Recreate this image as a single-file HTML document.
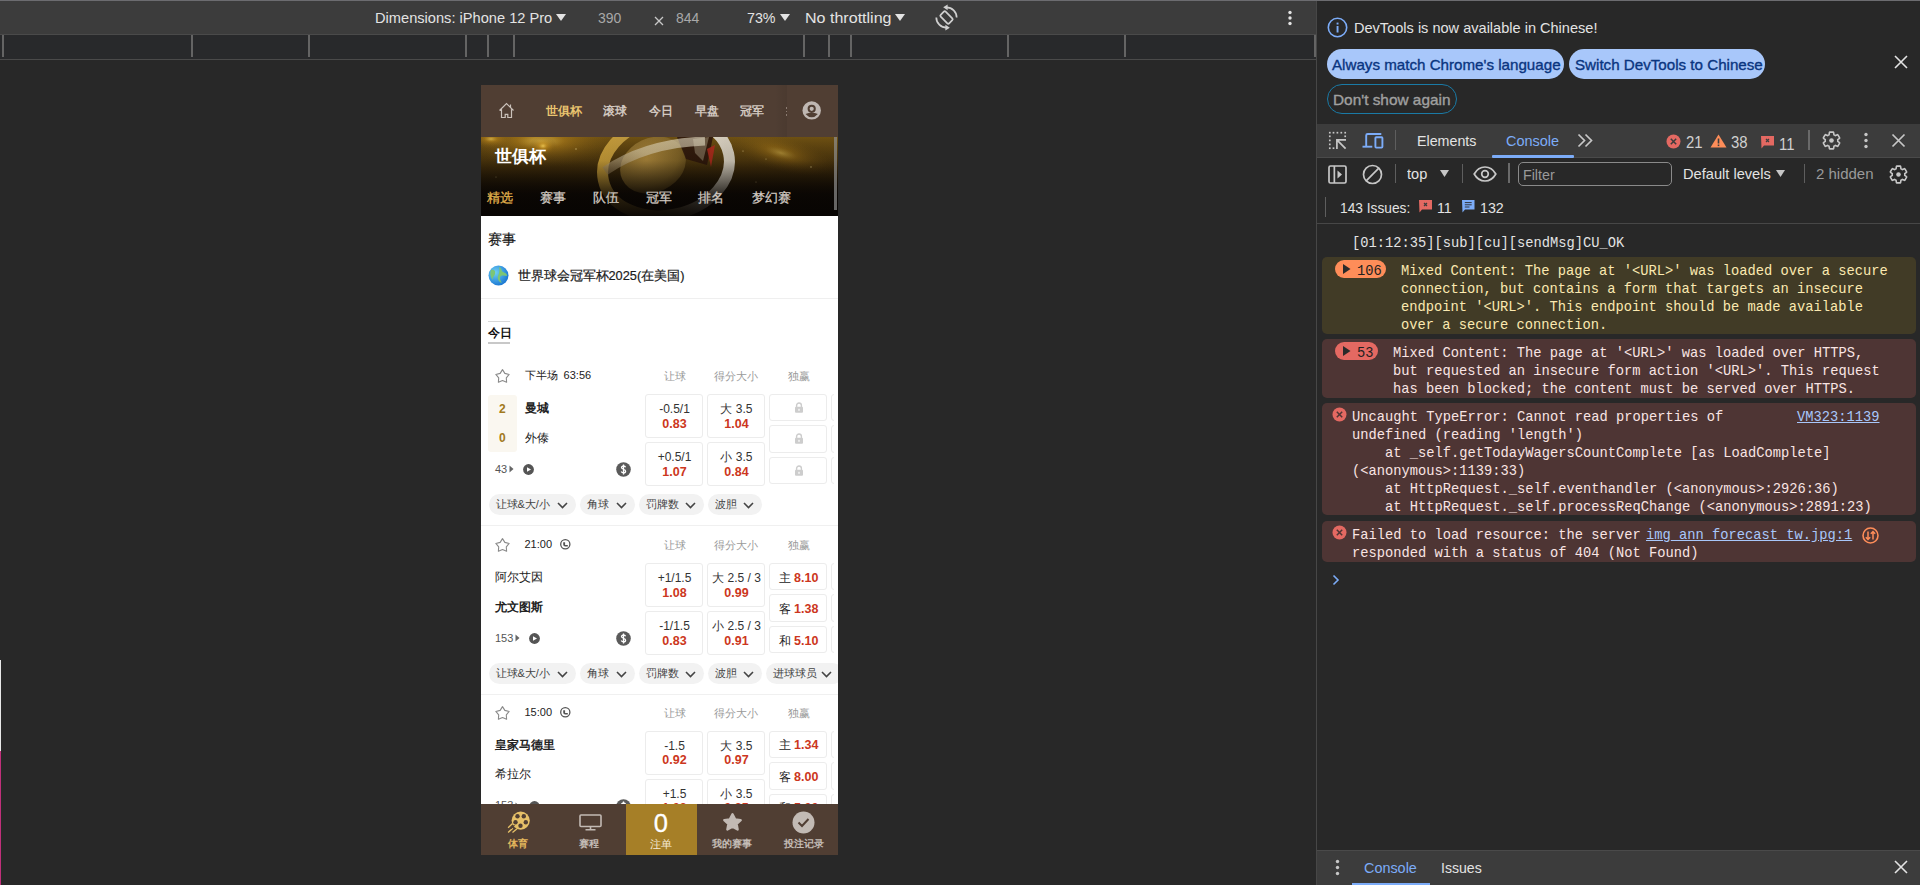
<!DOCTYPE html>
<html><head><meta charset="utf-8">
<style>
*{margin:0;padding:0;box-sizing:border-box}
html,body{width:1920px;height:885px;overflow:hidden;background:#282828;font-family:"Liberation Sans",sans-serif;color:#e3e3e3}
.a{position:absolute}
.t{white-space:nowrap;position:absolute;line-height:1}
.ui{font-size:15px;color:#e3e3e3}
.mono{font-family:"Liberation Mono",monospace;font-size:13.75px;line-height:18px}
.pill1{background:#a8c7fa;border-radius:15px}
.tick{position:absolute;top:35px;width:2px;height:22px;background:#646464}
</style></head><body>
<div class="a" style="left:0;top:0;width:1920px;height:1px;background:#6c6c70"></div>
<div class="a" style="left:0;top:1px;width:1316px;height:33px;background:#3c3c3c"></div>
<div class="a" style="left:0;top:34px;width:1316px;height:1px;background:#4a4a4a"></div>
<div class="a" style="left:0;top:35px;width:1316px;height:24px;background:#28292b"></div>
<div class="a" style="left:0;top:59px;width:1316px;height:1px;background:#4a4a4a"></div>
<div class="tick" style="left:2px"></div>
<div class="tick" style="left:191px"></div>
<div class="tick" style="left:308px"></div>
<div class="tick" style="left:465px"></div>
<div class="tick" style="left:487px"></div>
<div class="tick" style="left:513px"></div>
<div class="tick" style="left:803px"></div>
<div class="tick" style="left:828px"></div>
<div class="tick" style="left:850px"></div>
<div class="tick" style="left:1007px"></div>
<div class="tick" style="left:1124px"></div>
<div class="tick" style="left:1314px"></div>
<div class="a" style="left:1316px;top:1px;width:1px;height:884px;background:#474747"></div>

<!-- ===== device toolbar ===== -->
<div class="t ui" style="left:375px;top:10px;font-size:15px;transform:scaleX(0.975);transform-origin:left">Dimensions: iPhone 12 Pro</div>
<svg class="a" style="left:556px;top:14px" width="10" height="8"><path d="M0 0H10L5 7Z" fill="#e3e3e3"/></svg>
<div class="t ui" style="left:598px;top:10px;color:#a8a8a8;font-size:15px;transform:scaleX(0.93);transform-origin:left">390</div>
<svg class="a" style="left:654px;top:16px" width="10" height="10"><path d="M1 1L9 9M9 1L1 9" stroke="#c8c8c8" stroke-width="1.3"/></svg>
<div class="t ui" style="left:676px;top:10px;color:#a8a8a8;font-size:15px;transform:scaleX(0.93);transform-origin:left">844</div>
<div class="t ui" style="left:747px;top:10px;font-size:15px;transform:scaleX(0.95);transform-origin:left">73%</div>
<svg class="a" style="left:780px;top:14px" width="10" height="8"><path d="M0 0H10L5 7Z" fill="#e3e3e3"/></svg>
<div class="t ui" style="left:805px;top:10px;font-size:15px;transform:scaleX(1.07);transform-origin:left">No throttling</div>
<svg class="a" style="left:895px;top:14px" width="10" height="8"><path d="M0 0H10L5 7Z" fill="#e3e3e3"/></svg>
<svg class="a" style="left:930px;top:2px" width="32" height="32" viewBox="0 0 32 32"><g fill="none" stroke="#d0d0d0" stroke-width="1.7"><rect x="13" y="9.5" width="7" height="12" rx="1.3" transform="rotate(-45 16.5 15.5)"/><path d="M16.5 5.3A10.2 10.2 0 0 1 26.7 15.5"/><path d="M6.3 15.5A10.2 10.2 0 0 0 16.5 25.7"/></g><path d="M13.2 5.3L17.6 2.4V8.2Z" fill="#d0d0d0"/><path d="M19.8 25.7L15.4 22.8V28.6Z" fill="#d0d0d0"/></svg>
<svg class="a" style="left:1286.5px;top:9.5px" width="6" height="17"><circle cx="3" cy="2.5" r="1.7" fill="#e3e3e3"/><circle cx="3" cy="8" r="1.7" fill="#e3e3e3"/><circle cx="3" cy="13.5" r="1.7" fill="#e3e3e3"/></svg>

<!-- ===== DevTools infobar ===== -->
<svg class="a" style="left:1327px;top:17px" width="21" height="21" viewBox="0 0 21 21"><circle cx="10.5" cy="10.5" r="9.2" fill="none" stroke="#7cacf8" stroke-width="1.6"/><rect x="9.6" y="9" width="1.9" height="6.5" fill="#7cacf8"/><rect x="9.6" y="5.6" width="1.9" height="1.9" fill="#7cacf8"/></svg>
<div class="t ui" style="left:1354px;top:20px;font-size:15px;transform:scaleX(0.97);transform-origin:left">DevTools is now available in Chinese!</div>
<div class="a pill1" style="left:1327px;top:49px;width:237px;height:30px"></div>
<div class="t" style="left:1332px;top:57px;font-size:15px;color:#0a3580;-webkit-text-stroke:0.35px #0a3580;transform:scaleX(1.01);transform-origin:left">Always match Chrome's language</div>
<div class="a pill1" style="left:1569px;top:49px;width:196px;height:30px"></div>
<div class="t" style="left:1575px;top:57px;font-size:15px;color:#0a3580;-webkit-text-stroke:0.35px #0a3580;transform:scaleX(1.01);transform-origin:left">Switch DevTools to Chinese</div>
<div class="a" style="left:1327px;top:84px;width:130px;height:30px;border:1.5px solid #1a7aa6;border-radius:15px"></div>
<div class="t" style="left:1333px;top:92px;font-size:15px;color:#a0a0a0;-webkit-text-stroke:0.35px #a0a0a0;transform:scaleX(1.025);transform-origin:left">Don't show again</div>
<svg class="a" style="left:1894px;top:55px" width="14" height="14"><path d="M1 1L13 13M13 1L1 13" stroke="#e3e3e3" stroke-width="1.6"/></svg>

<!-- ===== main tab bar ===== -->
<div class="a" style="left:1317px;top:124px;width:603px;height:33px;background:#3c3c3c"></div>
<div class="a" style="left:1317px;top:157px;width:603px;height:1px;background:#4a4a4a"></div>
<svg class="a" style="left:1328px;top:131px" width="20" height="20" viewBox="0 0 20 20"><g fill="#c7c7c7"><rect x="0.95" y="0.85" width="1.7" height="1.7"/><rect x="4.65" y="0.85" width="1.7" height="1.7"/><rect x="8.55" y="0.85" width="1.7" height="1.7"/><rect x="12.45" y="0.85" width="1.7" height="1.7"/><rect x="16.35" y="0.85" width="1.7" height="1.7"/><rect x="0.95" y="4.45" width="1.7" height="1.7"/><rect x="0.95" y="8.55" width="1.7" height="1.7"/><rect x="0.95" y="12.55" width="1.7" height="1.7"/><rect x="0.95" y="16.35" width="1.7" height="1.7"/><rect x="16.35" y="4.45" width="1.7" height="1.7"/><rect x="4.65" y="16.35" width="1.7" height="1.7"/></g><path d="M8.9 18V8.9H18M8.9 8.9L17.6 17.6" stroke="#c7c7c7" stroke-width="1.7" fill="none"/></svg>
<svg class="a" style="left:1361px;top:132px" width="23" height="17" viewBox="0 0 23 17"><g fill="none" stroke="#7cacf8" stroke-width="1.9"><path d="M5.2 14.7V3.5Q5.2 2 6.7 2H20.3"/><path d="M1.5 14.7H11.3"/><rect x="14.4" y="5.2" width="7" height="10.4" rx="0.8"/></g></svg>
<div class="a" style="left:1395px;top:130px;width:1px;height:20px;background:#5e5e5e"></div>
<div class="t ui" style="left:1417px;top:133px;font-size:15px;color:#e3e3e3;transform:scaleX(0.95);transform-origin:left">Elements</div>
<div class="t ui" style="left:1506px;top:133px;font-size:15px;color:#7cacf8;transform:scaleX(0.965);transform-origin:left">Console</div>
<div class="a" style="left:1492px;top:155px;width:82px;height:3px;background:#7cacf8;border-radius:1px"></div>
<svg class="a" style="left:1577px;top:133px" width="17" height="15" viewBox="0 0 17 15"><path d="M1.5 1.5L7.5 7.5L1.5 13.5M8.5 1.5L14.5 7.5L8.5 13.5" fill="none" stroke="#c7c7c7" stroke-width="1.7"/></svg>
<svg class="a" style="left:1666px;top:134px" width="15" height="15" viewBox="0 0 15 15"><circle cx="7.5" cy="7.5" r="7" fill="#e46962"/><path d="M4.8 4.8L10.2 10.2M10.2 4.8L4.8 10.2" stroke="#3c3c3c" stroke-width="1.5"/></svg>
<div class="t ui" style="left:1686px;top:134.5px;font-size:16px;color:#d0d0d0;transform:scaleX(0.93);transform-origin:left">21</div>
<svg class="a" style="left:1710px;top:134px" width="17" height="14" viewBox="0 0 17 14"><path d="M8.5 0.5L16.5 13.5H0.5Z" fill="#fe8d59"/><rect x="7.7" y="4.5" width="1.6" height="5" fill="#3c3c3c"/><rect x="7.7" y="10.5" width="1.6" height="1.6" fill="#3c3c3c"/></svg>
<div class="t ui" style="left:1731px;top:134.5px;font-size:16px;color:#d0d0d0;transform:scaleX(0.93);transform-origin:left">38</div>
<svg class="a" style="left:1761px;top:136px" width="14" height="13" viewBox="0 0 14 13"><path d="M0 0H13V9.5H3L0.5 12.5Z" fill="#e46962"/><path d="M5 3L8 6M8 3L5 6" stroke="#3c3c3c" stroke-width="1.2"/></svg>
<div class="t ui" style="left:1779px;top:136.5px;font-size:16px;color:#d0d0d0;transform:scaleX(0.93);transform-origin:left">11</div>
<div class="a" style="left:1808px;top:130px;width:1.5px;height:20px;background:#6a6a6a"></div>
<svg class="a" style="left:1821px;top:130px" width="21" height="21" viewBox="0 0 24 24"><path fill="none" stroke="#c7c7c7" stroke-width="1.8" d="M19.14 12.94c.04-.3.06-.61.06-.94 0-.32-.02-.64-.07-.94l2.03-1.58c.18-.14.23-.41.12-.61l-1.92-3.32c-.12-.22-.37-.29-.59-.22l-2.39.96c-.5-.38-1.030-.7-1.62-.94l-.36-2.54c-.04-.24-.24-.41-.48-.41h-3.84c-.24 0-.43.17-.47.41l-.36 2.54c-.59.24-1.13.57-1.62.94l-2.39-.96c-.22-.08-.47 0-.59.22L2.74 8.87c-.12.21-.08.47.12.61l2.03 1.58c-.05.3-.09.63-.09.94s.02.64.07.94l-2.030 1.58c-.18.14-.23.41-.12.61l1.92 3.32c.12.22.37.29.59.22l2.39-.96c.5.38 1.03.7 1.62.94l.36 2.54c.05.24.24.41.48.41h3.84c.24 0 .44-.17.47-.41l.36-2.54c.59-.24 1.13-.56 1.62-.94l2.39.96c.22.08.47 0 .59-.22l1.92-3.32c.12-.22.07-.47-.12-.61l-2.01-1.58z"/><circle cx="12" cy="12" r="2.6" fill="#c7c7c7"/></svg>
<svg class="a" style="left:1863px;top:132px" width="6" height="17"><circle cx="3" cy="2.5" r="1.7" fill="#c7c7c7"/><circle cx="3" cy="8.5" r="1.7" fill="#c7c7c7"/><circle cx="3" cy="14.5" r="1.7" fill="#c7c7c7"/></svg>
<svg class="a" style="left:1891px;top:133px" width="15" height="15"><path d="M1.5 1.5L13.5 13.5M13.5 1.5L1.5 13.5" stroke="#c7c7c7" stroke-width="1.7"/></svg>

<!-- ===== console toolbar ===== -->
<svg class="a" style="left:1328px;top:165px" width="19" height="19" viewBox="0 0 19 19"><rect x="1" y="1" width="17" height="17" rx="1.5" fill="none" stroke="#c7c7c7" stroke-width="1.7"/><rect x="5.5" y="1" width="1.7" height="17" fill="#c7c7c7"/><path d="M9.5 5.5L14 9.5L9.5 13.5Z" fill="#c7c7c7"/></svg>
<svg class="a" style="left:1362px;top:164px" width="21" height="21" viewBox="0 0 21 21"><circle cx="10.5" cy="10.5" r="9" fill="none" stroke="#c7c7c7" stroke-width="1.7"/><path d="M4.2 16.8L16.8 4.2" stroke="#c7c7c7" stroke-width="1.7"/></svg>
<div class="a" style="left:1395px;top:164px;width:1px;height:19px;background:#5e5e5e"></div>
<div class="t ui" style="left:1407px;top:166px;font-size:15px;transform:scaleX(0.97);transform-origin:left">top</div>
<svg class="a" style="left:1440px;top:170px" width="10" height="8"><path d="M0 0H9L4.5 7Z" fill="#c7c7c7"/></svg>
<div class="a" style="left:1462px;top:164px;width:1px;height:19px;background:#5e5e5e"></div>
<svg class="a" style="left:1473px;top:166px" width="24" height="16" viewBox="0 0 24 16"><path d="M1.2 8C4 3 8 1 12 1s8 2 10.8 7C20 13 16 15 12 15S4 13 1.2 8Z" fill="none" stroke="#c7c7c7" stroke-width="1.7"/><circle cx="12" cy="8" r="3.3" fill="none" stroke="#c7c7c7" stroke-width="1.7"/></svg>
<div class="a" style="left:1508px;top:163px;width:1.5px;height:20px;background:#6a6a6a"></div>
<div class="a" style="left:1518px;top:162px;width:154px;height:24px;border:1px solid #8a8a8a;border-radius:5px"></div>
<div class="t ui" style="left:1523px;top:167px;font-size:15px;color:#9a9a9a;transform:scaleX(0.95);transform-origin:left">Filter</div>
<div class="t ui" style="left:1683px;top:166px;font-size:15px;transform:scaleX(0.975);transform-origin:left">Default levels</div>
<svg class="a" style="left:1776px;top:170px" width="10" height="8"><path d="M0 0H9L4.5 7Z" fill="#c7c7c7"/></svg>
<div class="a" style="left:1804px;top:164px;width:1px;height:19px;background:#5e5e5e"></div>
<div class="t ui" style="left:1816px;top:166px;font-size:15px;color:#9a9a9a;transform:scaleX(1.0);transform-origin:left">2 hidden</div>
<svg class="a" style="left:1888px;top:164px" width="21" height="21" viewBox="0 0 24 24"><path fill="none" stroke="#c7c7c7" stroke-width="1.8" d="M19.14 12.94c.04-.3.06-.61.06-.94 0-.32-.02-.64-.07-.94l2.03-1.58c.18-.14.23-.41.12-.61l-1.92-3.32c-.12-.22-.37-.29-.59-.22l-2.39.96c-.5-.38-1.030-.7-1.62-.94l-.36-2.54c-.04-.24-.24-.41-.48-.41h-3.84c-.24 0-.43.17-.47.41l-.36 2.54c-.59.24-1.13.57-1.62.94l-2.39-.96c-.22-.08-.47 0-.59.22L2.74 8.87c-.12.21-.08.47.12.61l2.03 1.58c-.05.3-.09.63-.09.94s.02.64.07.94l-2.030 1.58c-.18.14-.23.41-.12.61l1.92 3.32c.12.22.37.29.59.22l2.39-.96c.5.38 1.03.7 1.62.94l.36 2.54c.05.24.24.41.48.41h3.84c.24 0 .44-.17.47-.41l.36-2.54c.59-.24 1.13-.56 1.62-.94l2.39.96c.22.08.47 0 .59-.22l1.92-3.32c.12-.22.07-.47-.12-.61l-2.01-1.58z"/><circle cx="12" cy="12" r="2.6" fill="#c7c7c7"/></svg>

<!-- issues row -->
<div class="a" style="left:1325px;top:197px;width:1px;height:20px;background:#5e5e5e"></div>
<div class="t ui" style="left:1340px;top:200px;font-size:15px;transform:scaleX(0.915);transform-origin:left">143 Issues:</div>
<svg class="a" style="left:1419px;top:200px" width="14" height="13" viewBox="0 0 14 13"><path d="M0 0H13V9.5H3L0.5 12.5Z" fill="#e46962"/><path d="M5 3L8 6M8 3L5 6" stroke="#3c3c3c" stroke-width="1.2"/></svg>
<div class="t ui" style="left:1437px;top:200px;font-size:15px;transform:scaleX(0.95);transform-origin:left">11</div>
<svg class="a" style="left:1462px;top:200px" width="13" height="13" viewBox="0 0 13 13"><path d="M0 0H12.5V9.5H3L0.5 12.5Z" fill="#7cacf8"/><path d="M2.8 2.6H9.7M2.8 4.8H9.7M2.8 7H7.5" stroke="#282828" stroke-width="0.9"/></svg>
<div class="t ui" style="left:1480px;top:200px;font-size:15px;transform:scaleX(0.95);transform-origin:left">132</div>
<div class="a" style="left:1317px;top:223px;width:603px;height:1px;background:#474747"></div>

<!-- console messages -->
<div class="t mono" style="left:1352px;top:235px;color:#e3e3e3">[01:12:35][sub][cu][sendMsg]CU_OK</div>

<div class="a" style="left:1322px;top:257px;width:594px;height:77px;background:#413b26;border-radius:5px"></div>
<div class="a" style="left:1335px;top:260px;width:51px;height:18px;background:#fe8d59;border-radius:9px"></div>
<svg class="a" style="left:1343px;top:264px" width="8" height="10"><path d="M0 0L7.5 5L0 10Z" fill="#2a2a2a"/></svg>
<div class="t mono" style="left:1357px;top:263px;color:#1f1f1f;font-size:13.75px;line-height:18px">106</div>
<div class="a mono" style="left:1401px;top:263px;color:#fbe9b0;white-space:pre;line-height:18px">Mixed Content: The page at '&lt;URL&gt;' was loaded over a secure
connection, but contains a form that targets an insecure
endpoint '&lt;URL&gt;'. This endpoint should be made available
over a secure connection.</div>

<div class="a" style="left:1322px;top:339px;width:594px;height:59px;background:#4e3534;border-radius:5px"></div>
<div class="a" style="left:1335px;top:342px;width:43px;height:18px;background:#e46962;border-radius:9px"></div>
<svg class="a" style="left:1343px;top:346px" width="8" height="10"><path d="M0 0L7.5 5L0 10Z" fill="#2a2a2a"/></svg>
<div class="t mono" style="left:1357px;top:345px;color:#1f1f1f;line-height:18px">53</div>
<div class="a mono" style="left:1393px;top:345px;color:#f9e4e3;white-space:pre;line-height:18px">Mixed Content: The page at '&lt;URL&gt;' was loaded over HTTPS,
but requested an insecure form action '&lt;URL&gt;'. This request
has been blocked; the content must be served over HTTPS.</div>

<div class="a" style="left:1322px;top:403px;width:594px;height:112px;background:#4e3534;border-radius:5px"></div>
<svg class="a" style="left:1332px;top:407px" width="15" height="15" viewBox="0 0 15 15"><circle cx="7.5" cy="7.5" r="7" fill="#e46962"/><path d="M4.8 4.8L10.2 10.2M10.2 4.8L4.8 10.2" stroke="#4e3534" stroke-width="1.5"/></svg>
<div class="a mono" style="left:1352px;top:409px;color:#f9e4e3;white-space:pre;line-height:18px">Uncaught TypeError: Cannot read properties of
undefined (reading 'length')
    at _self.getTodayWagersCountComplete [as LoadComplete]
(&lt;anonymous&gt;:1139:33)
    at HttpRequest._self.eventhandler (&lt;anonymous&gt;:2926:36)
    at HttpRequest._self.processReqChange (&lt;anonymous&gt;:2891:23)</div>
<div class="t mono" style="left:1797px;top:409px;color:#a8c7fa;text-decoration:underline;line-height:18px">VM323:1139</div>

<div class="a" style="left:1322px;top:521px;width:594px;height:41px;background:#4e3534;border-radius:5px"></div>
<svg class="a" style="left:1332px;top:525px" width="15" height="15" viewBox="0 0 15 15"><circle cx="7.5" cy="7.5" r="7" fill="#e46962"/><path d="M4.8 4.8L10.2 10.2M10.2 4.8L4.8 10.2" stroke="#4e3534" stroke-width="1.5"/></svg>
<div class="a mono" style="left:1352px;top:527px;color:#f9e4e3;white-space:pre;line-height:18px">Failed to load resource: the server
responded with a status of 404 (Not Found)</div>
<div class="t mono" style="left:1646px;top:527px;color:#a8c7fa;text-decoration:underline;line-height:18px">img_ann_forecast_tw.jpg:1</div>
<svg class="a" style="left:1862px;top:527px" width="17" height="17" viewBox="0 0 17 17"><circle cx="8.5" cy="8.5" r="7.5" fill="none" stroke="#fe8d59" stroke-width="1.6"/><path d="M6 4.5V12.5M3.8 10.3L6 12.5L8.2 10.3M11 12.5V4.5M8.8 6.7L11 4.5L13.2 6.7" fill="none" stroke="#fe8d59" stroke-width="1.5"/></svg>
<svg class="a" style="left:1332px;top:574px" width="8" height="12" viewBox="0 0 8 12"><path d="M1.5 1.5L6 6L1.5 10.5" fill="none" stroke="#7cacf8" stroke-width="1.6"/></svg>

<!-- drawer -->
<div class="a" style="left:1317px;top:851px;width:603px;height:34px;background:#3c3c3c"></div>
<div class="a" style="left:1317px;top:850px;width:603px;height:1px;background:#4a4a4a"></div>
<svg class="a" style="left:1334px;top:859px" width="7" height="17"><circle cx="3.5" cy="2.5" r="1.7" fill="#c7c7c7"/><circle cx="3.5" cy="8.5" r="1.7" fill="#c7c7c7"/><circle cx="3.5" cy="14.5" r="1.7" fill="#c7c7c7"/></svg>
<div class="t ui" style="left:1364px;top:860px;font-size:15px;color:#7cacf8;transform:scaleX(0.96);transform-origin:left">Console</div>
<div class="t ui" style="left:1441px;top:860px;font-size:15px;transform:scaleX(0.94);transform-origin:left">Issues</div>
<div class="a" style="left:1352px;top:883px;width:78px;height:2px;background:#7cacf8"></div>
<svg class="a" style="left:1894px;top:860px" width="14" height="14"><path d="M1 1L13 13M13 1L1 13" stroke="#e3e3e3" stroke-width="1.6"/></svg>

<div class="a" style="left:0;top:660px;width:1px;height:91px;background:#e8e8e8"></div>
<div class="a" style="left:0;top:751px;width:1px;height:134px;background:#c0307a"></div>

<!-- ===== mobile device ===== -->
<div class="a" id="dev" style="left:481px;top:85px;width:357px;height:770px;background:#fff;overflow:hidden;color:#222">
<style>
#dev .c{position:absolute;white-space:nowrap;line-height:1;font-family:"Liberation Sans",sans-serif}
#dev .nav{font-size:12px;font-weight:bold;color:#d2c8c0;top:19.5px}
#dev .sub{font-size:13px;color:#d4ccc4;top:106px;-webkit-text-stroke:0.25px currentColor}
#dev .hd{font-size:11px;color:#9a9a9a}
#dev .cell{position:absolute;border:1px solid #ececec;border-radius:3px;background:#fff}
#dev .od{font-size:12px;color:#333;text-align:center;width:58px}
#dev .rd{font-size:12.5px;color:#cc3620;font-weight:bold;text-align:center;width:58px}
#dev .pill{position:absolute;height:22px;background:#f2f2f2;border-radius:11px}
#dev .pt{font-size:11px;color:#444}
#dev .tm{font-size:12px;color:#222}
#dev .ft{font-size:10px;font-weight:bold;color:#c4bcb6;text-align:center;width:71px}
</style>
<!-- header -->
<div class="a" style="left:0;top:0;width:357px;height:52px;background:#503e33"></div>
<div class="a" style="left:294px;top:0;width:12px;height:52px;background:linear-gradient(90deg,rgba(0,0,0,0),rgba(0,0,0,0.07))"></div>
<svg class="a" style="left:17px;top:17px" width="17" height="17" viewBox="0 0 17 17"><path d="M1.5 8.5L8.5 1.5L15.5 8.5M3.5 7.2V15.5H7.2V12.3H9.8V15.5H13.5V7.2M12.5 2.6V5.2" fill="none" stroke="#cbc2bb" stroke-width="1.2"/></svg>
<div class="c nav" style="left:65px;color:#e9c46f">世俱杯</div>
<div class="c nav" style="left:122px">滚球</div>
<div class="c nav" style="left:168px">今日</div>
<div class="c nav" style="left:214px">早盘</div>
<div class="c nav" style="left:259px">冠军</div>
<div class="a" style="left:305px;top:22px;width:1px;height:1.5px;background:#8a7a70"></div><div class="a" style="left:305px;top:25.5px;width:1px;height:1.5px;background:#8a7a70"></div><div class="a" style="left:305px;top:29px;width:1px;height:1.5px;background:#8a7a70"></div>
<svg class="a" style="left:321px;top:16px" width="20" height="20" viewBox="0 0 20 20"><circle cx="9.7" cy="9.4" r="9.2" fill="#bfb7b2"/><circle cx="9.7" cy="7.8" r="3.1" fill="none" stroke="#503e33" stroke-width="2"/><path d="M3.5 12.9Q9.7 10.6 15.9 12.9Q9.7 19.8 3.5 12.9Z" fill="#503e33"/></svg>

<!-- banner -->
<svg class="a" style="left:0;top:52px" width="357" height="79" viewBox="0 0 357 79">
<defs>
<linearGradient id="bg1" x1="0" y1="0" x2="0" y2="1"><stop offset="0" stop-color="#6e5012"/><stop offset="0.4" stop-color="#3f2c0b"/><stop offset="0.75" stop-color="#140d05"/><stop offset="1" stop-color="#080503"/></linearGradient>
<radialGradient id="gl1" cx="0.5" cy="0.5" r="0.5"><stop offset="0" stop-color="#ffd65a" stop-opacity="0.95"/><stop offset="0.3" stop-color="#c88f1c" stop-opacity="0.6"/><stop offset="1" stop-color="#6a4a10" stop-opacity="0"/></radialGradient>
<linearGradient id="ring" x1="0" y1="0" x2="1" y2="0"><stop offset="0" stop-color="#c49a36"/><stop offset="0.35" stop-color="#b89440"/><stop offset="0.7" stop-color="#e2dccb"/><stop offset="1" stop-color="#d0c8b8"/></linearGradient>
<linearGradient id="band" x1="0" y1="1" x2="1" y2="0"><stop offset="0" stop-color="#a08860"/><stop offset="0.5" stop-color="#d8cdb0"/><stop offset="1" stop-color="#e8e0c8"/></linearGradient>
<radialGradient id="globe" cx="0.45" cy="0.35" r="0.7"><stop offset="0" stop-color="#a8843a"/><stop offset="0.7" stop-color="#7e6226"/><stop offset="1" stop-color="#5a4418"/></radialGradient>
<linearGradient id="fade" x1="0" y1="0" x2="0" y2="1"><stop offset="0" stop-color="#080503" stop-opacity="0"/><stop offset="0.3" stop-color="#080503" stop-opacity="0.1"/><stop offset="0.72" stop-color="#080503" stop-opacity="0.8"/><stop offset="1" stop-color="#080503" stop-opacity="0.97"/></linearGradient>
</defs>
<rect width="357" height="79" fill="url(#bg1)"/>
<ellipse cx="60" cy="4" rx="80" ry="26" fill="url(#gl1)" opacity="0.75"/>
<ellipse cx="62" cy="9" rx="14" ry="10" fill="url(#gl1)" opacity="0.9"/>
<ellipse cx="10" cy="2" rx="22" ry="10" fill="url(#gl1)" opacity="0.7"/>
<ellipse cx="300" cy="16" rx="55" ry="18" fill="url(#gl1)" opacity="0.5" transform="rotate(15 300 16)"/>
<g fill="#ffe9a0" opacity="0.7"><circle cx="30" cy="20" r="0.6"/><circle cx="95" cy="12" r="0.7"/><circle cx="120" cy="30" r="0.5"/><circle cx="250" cy="8" r="0.6"/><circle cx="330" cy="30" r="0.7"/><circle cx="275" cy="45" r="0.6"/><circle cx="15" cy="40" r="0.5"/><circle cx="262" cy="14" r="0.6"/><circle cx="285" cy="22" r="0.5"/></g>
<ellipse cx="185" cy="30" rx="64" ry="48" transform="rotate(-12 185 30)" fill="none" stroke="url(#ring)" stroke-width="11"/>
<ellipse cx="172" cy="28" rx="34" ry="27" transform="rotate(-25 172 28)" fill="url(#globe)"/>
<path d="M196 0L232 0L226 28L205 22Z" fill="#2a140c" opacity="0.85"/>
<path d="M212 2L228 0L222 24L214 16Z" fill="#d8cdb0" opacity="0.35"/>
<path d="M226 12L234 8L230 30Z" fill="#b0281c" opacity="0.85"/>
<path d="M124 34Q165 6 224 4" fill="none" stroke="url(#band)" stroke-width="9" opacity="0.6"/>
<rect width="357" height="79" fill="url(#fade)"/>
</svg>
<div class="a" style="left:353px;top:52px;width:3px;height:73px;background:#8f8f8f;opacity:0.7"></div>
<div class="c" style="left:14px;top:63px;font-size:17px;font-weight:bold;color:#fff">世俱杯</div>
<div class="c sub" style="left:6px;color:#e5b54e">精选</div>
<div class="c sub" style="left:59px">赛事</div>
<div class="c sub" style="left:112px">队伍</div>
<div class="c sub" style="left:165px">冠军</div>
<div class="c sub" style="left:217px">排名</div>
<div class="c sub" style="left:271px">梦幻赛</div>

<!-- competitions -->
<div class="c" style="left:7px;top:147px;font-size:14.2px;color:#111;-webkit-text-stroke:0.2px #111">赛事</div>
<svg class="a" style="left:7px;top:180px" width="21" height="21" viewBox="0 0 21 21"><defs><radialGradient id="glb" cx="0.35" cy="0.35" r="0.7"><stop offset="0" stop-color="#6fd0f5"/><stop offset="1" stop-color="#1976d2"/></radialGradient></defs><circle cx="10.5" cy="10.5" r="10" fill="url(#glb)"/><path d="M3 5C6 4 8 6 7 9S4 12 5 15C3 13 1.5 9 3 5ZM11 2C14 3 13 6 15 7S19 8 19 11C17 11 15 10 13 11S12 15 14 18C11 17 9 14 10 11S12 6 11 2Z" fill="#7cc576"/></svg>
<div class="c" style="left:36.5px;top:185px;font-size:12.8px;-webkit-text-stroke:0.2px #1a1a1a;color:#1a1a1a">世界球会冠军杯2025(在美国)</div>
<div class="a" style="left:0;top:213px;width:357px;height:1px;background:#efefef"></div>

<!-- today tab -->
<div class="a" style="left:7px;top:236px;width:22px;height:1px;background:#d8d8d8"></div>
<div class="c" style="left:7px;top:242.5px;font-size:11.5px;font-weight:bold;color:#111">今日</div>
<div class="a" style="left:7px;top:257px;width:22px;height:2px;background:#c8c8c8"></div>

<svg class="a" style="left:13px;top:282.7px" width="17" height="16" viewBox="0 0 17 16"><path d="M8.50 1.60L10.85 5.36L15.16 6.44L12.30 9.84L12.61 14.26L8.50 12.60L4.39 14.26L4.70 9.84L1.84 6.44L6.15 5.36Z" fill="none" stroke="#8a8a8a" stroke-width="1.1" stroke-linejoin="round"/></svg>
<div class="c " style="left:43.5px;top:284.8px;font-size:11px;color:#222">下半场&nbsp;&nbsp;63:56</div>
<div class="c hd" style="left:182.5px;top:286px;">让球</div>
<div class="c hd" style="left:233px;top:286px;">得分大小</div>
<div class="c hd" style="left:306.5px;top:286px;">独赢</div>
<div class="a" style="left:7px;top:310px;width:29px;height:57px;background:#faf7f0;border-radius:3px"></div>
<div class="c " style="left:18px;top:318px;font-size:12px;font-weight:bold;color:#a27a1c">2</div>
<div class="c " style="left:18px;top:347px;font-size:12px;font-weight:bold;color:#a27a1c">0</div>
<div class="c tm" style="left:43.5px;top:317px;font-weight:bold">曼城</div>
<div class="c tm" style="left:43.5px;top:346.5px;">外傣</div>
<div class="cell" style="left:163.5px;top:308.7px;width:58px;height:44px"></div>
<div class="c od" style="left:164.5px;top:318.0px;">-0.5/1</div>
<div class="c rd" style="left:164.5px;top:332.5px;">0.83</div>
<div class="cell" style="left:163.5px;top:356.7px;width:58px;height:44px"></div>
<div class="c od" style="left:164.5px;top:366.0px;">+0.5/1</div>
<div class="c rd" style="left:164.5px;top:380.5px;">1.07</div>
<div class="cell" style="left:225.5px;top:308.7px;width:58px;height:44px"></div>
<div class="c od" style="left:226.5px;top:318.0px;">大 3.5</div>
<div class="c rd" style="left:226.5px;top:332.5px;">1.04</div>
<div class="cell" style="left:225.5px;top:356.7px;width:58px;height:44px"></div>
<div class="c od" style="left:226.5px;top:366.0px;">小 3.5</div>
<div class="c rd" style="left:226.5px;top:380.5px;">0.84</div>
<div class="cell" style="left:287.5px;top:308.7px;width:58px;height:27.5px"></div>
<div class="cell" style="left:349.5px;top:308.7px;width:58px;height:27.5px"></div>
<svg class="a" style="left:312.5px;top:316.5px" width="10" height="11" viewBox="0 0 10 11"><path d="M2.6 5V3.4A2.4 2.4 0 0 1 7.4 3.4V5" fill="none" stroke="#cdcdcd" stroke-width="1.4"/><rect x="1" y="4.8" width="8" height="6" rx="1" fill="#cdcdcd"/><rect x="4.4" y="6.8" width="1.2" height="2" fill="#fff"/></svg>
<div class="cell" style="left:287.5px;top:340.3px;width:58px;height:27.5px"></div>
<div class="cell" style="left:349.5px;top:340.3px;width:58px;height:27.5px"></div>
<svg class="a" style="left:312.5px;top:348.1px" width="10" height="11" viewBox="0 0 10 11"><path d="M2.6 5V3.4A2.4 2.4 0 0 1 7.4 3.4V5" fill="none" stroke="#cdcdcd" stroke-width="1.4"/><rect x="1" y="4.8" width="8" height="6" rx="1" fill="#cdcdcd"/><rect x="4.4" y="6.8" width="1.2" height="2" fill="#fff"/></svg>
<div class="cell" style="left:287.5px;top:371.7px;width:58px;height:27.5px"></div>
<div class="cell" style="left:349.5px;top:371.7px;width:58px;height:27.5px"></div>
<svg class="a" style="left:312.5px;top:379.5px" width="10" height="11" viewBox="0 0 10 11"><path d="M2.6 5V3.4A2.4 2.4 0 0 1 7.4 3.4V5" fill="none" stroke="#cdcdcd" stroke-width="1.4"/><rect x="1" y="4.8" width="8" height="6" rx="1" fill="#cdcdcd"/><rect x="4.4" y="6.8" width="1.2" height="2" fill="#fff"/></svg>
<div class="a" style="left:353px;top:307.5px;width:4px;height:96px;background:#fff"></div>
<div class="c " style="left:14px;top:378.5px;font-size:11px;color:#555">43</div>
<svg class="a" style="left:28px;top:380px" width="5" height="8" viewBox="0 0 5 8"><path d="M0.5 0.5L4.5 4L0.5 7.5Z" fill="#666"/></svg>
<svg class="a" style="left:41.5px;top:379px" width="11" height="11" viewBox="0 0 11 11"><circle cx="5.5" cy="5.5" r="5.4" fill="#555"/><path d="M4 3.2L8 5.5L4 7.8Z" fill="#fff"/></svg>
<svg class="a" style="left:135px;top:377px" width="15" height="15" viewBox="0 0 15 15"><circle cx="7.5" cy="7.5" r="7.3" fill="#5a5a5a"/><path d="M9.6 5.2C9.2 4.3 8.4 4 7.5 4C6.4 4 5.5 4.6 5.5 5.6C5.5 7.6 9.6 6.9 9.6 9.2C9.6 10.3 8.6 10.9 7.5 10.9C6.5 10.9 5.7 10.5 5.3 9.6M7.5 2.6V12.4" fill="none" stroke="#fff" stroke-width="1.3"/></svg>
<div class="pill" style="left:7.5px;top:408.5px;width:87.5px;height:21.5px"></div>
<div class="c pt" style="left:14.5px;top:413.5px;">让球&amp;大/小</div>
<svg class="a" style="left:76.0px;top:416.5px" width="11" height="7" viewBox="0 0 11 7"><path d="M1 1L5.5 5.5L10 1" fill="none" stroke="#444" stroke-width="1.6"/></svg>
<div class="pill" style="left:99.1px;top:408.5px;width:54.5px;height:21.5px"></div>
<div class="c pt" style="left:106.1px;top:413.5px;">角球</div>
<svg class="a" style="left:134.6px;top:416.5px" width="11" height="7" viewBox="0 0 11 7"><path d="M1 1L5.5 5.5L10 1" fill="none" stroke="#444" stroke-width="1.6"/></svg>
<div class="pill" style="left:157.7px;top:408.5px;width:65px;height:21.5px"></div>
<div class="c pt" style="left:164.7px;top:413.5px;">罚牌数</div>
<svg class="a" style="left:203.7px;top:416.5px" width="11" height="7" viewBox="0 0 11 7"><path d="M1 1L5.5 5.5L10 1" fill="none" stroke="#444" stroke-width="1.6"/></svg>
<div class="pill" style="left:226.79999999999998px;top:408.5px;width:54.5px;height:21.5px"></div>
<div class="c pt" style="left:233.79999999999998px;top:413.5px;">波胆</div>
<svg class="a" style="left:262.29999999999995px;top:416.5px" width="11" height="7" viewBox="0 0 11 7"><path d="M1 1L5.5 5.5L10 1" fill="none" stroke="#444" stroke-width="1.6"/></svg>
<div class="a" style="left:0;top:440px;width:357px;height:1px;background:#f0f0f0"></div>
<svg class="a" style="left:13px;top:451.7px" width="17" height="16" viewBox="0 0 17 16"><path d="M8.50 1.60L10.85 5.36L15.16 6.44L12.30 9.84L12.61 14.26L8.50 12.60L4.39 14.26L4.70 9.84L1.84 6.44L6.15 5.36Z" fill="none" stroke="#8a8a8a" stroke-width="1.1" stroke-linejoin="round"/></svg>
<div class="c " style="left:43.5px;top:453.8px;font-size:11px;color:#222">21:00</div>
<svg class="a" style="left:78.8px;top:454px" width="11" height="11" viewBox="0 0 11 11"><circle cx="5.3" cy="5.3" r="4.6" fill="none" stroke="#555" stroke-width="1.3"/><path d="M3.2 3.2H5.1V5.9H7.8V7.6H5.2Q3.2 7.6 3.2 5.6Z" fill="#555"/></svg>
<div class="c hd" style="left:182.5px;top:455px;">让球</div>
<div class="c hd" style="left:233px;top:455px;">得分大小</div>
<div class="c hd" style="left:306.5px;top:455px;">独赢</div>
<div class="c tm" style="left:14px;top:486px;">阿尔艾因</div>
<div class="c tm" style="left:14px;top:515.5px;font-weight:bold">尤文图斯</div>
<div class="cell" style="left:163.5px;top:477.7px;width:58px;height:44px"></div>
<div class="c od" style="left:164.5px;top:487.0px;">+1/1.5</div>
<div class="c rd" style="left:164.5px;top:501.5px;">1.08</div>
<div class="cell" style="left:163.5px;top:525.7px;width:58px;height:44px"></div>
<div class="c od" style="left:164.5px;top:535.0px;">-1/1.5</div>
<div class="c rd" style="left:164.5px;top:549.5px;">0.83</div>
<div class="cell" style="left:225.5px;top:477.7px;width:58px;height:44px"></div>
<div class="c od" style="left:226.5px;top:487.0px;">大 2.5 / 3</div>
<div class="c rd" style="left:226.5px;top:501.5px;">0.99</div>
<div class="cell" style="left:225.5px;top:525.7px;width:58px;height:44px"></div>
<div class="c od" style="left:226.5px;top:535.0px;">小 2.5 / 3</div>
<div class="c rd" style="left:226.5px;top:549.5px;">0.91</div>
<div class="cell" style="left:287.5px;top:477.7px;width:58px;height:27.5px"></div>
<div class="cell" style="left:349.5px;top:477.7px;width:58px;height:27.5px"></div>
<div class="c" style="left:288.5px;top:486.5px;width:58px;text-align:center;font-size:12px;color:#222">主 <span style="color:#cc3620;font-weight:bold;font-size:12.5px">8.10</span></div>
<div class="cell" style="left:287.5px;top:509.3px;width:58px;height:27.5px"></div>
<div class="cell" style="left:349.5px;top:509.3px;width:58px;height:27.5px"></div>
<div class="c" style="left:288.5px;top:518.1px;width:58px;text-align:center;font-size:12px;color:#222">客 <span style="color:#cc3620;font-weight:bold;font-size:12.5px">1.38</span></div>
<div class="cell" style="left:287.5px;top:540.7px;width:58px;height:27.5px"></div>
<div class="cell" style="left:349.5px;top:540.7px;width:58px;height:27.5px"></div>
<div class="c" style="left:288.5px;top:549.5px;width:58px;text-align:center;font-size:12px;color:#222">和 <span style="color:#cc3620;font-weight:bold;font-size:12.5px">5.10</span></div>
<div class="a" style="left:353px;top:476.5px;width:4px;height:96px;background:#fff"></div>
<div class="c " style="left:14px;top:547.5px;font-size:11px;color:#555">153</div>
<svg class="a" style="left:34px;top:549px" width="5" height="8" viewBox="0 0 5 8"><path d="M0.5 0.5L4.5 4L0.5 7.5Z" fill="#666"/></svg>
<svg class="a" style="left:48px;top:548px" width="11" height="11" viewBox="0 0 11 11"><circle cx="5.5" cy="5.5" r="5.4" fill="#555"/><path d="M4 3.2L8 5.5L4 7.8Z" fill="#fff"/></svg>
<svg class="a" style="left:135px;top:546px" width="15" height="15" viewBox="0 0 15 15"><circle cx="7.5" cy="7.5" r="7.3" fill="#5a5a5a"/><path d="M9.6 5.2C9.2 4.3 8.4 4 7.5 4C6.4 4 5.5 4.6 5.5 5.6C5.5 7.6 9.6 6.9 9.6 9.2C9.6 10.3 8.6 10.9 7.5 10.9C6.5 10.9 5.7 10.5 5.3 9.6M7.5 2.6V12.4" fill="none" stroke="#fff" stroke-width="1.3"/></svg>
<div class="pill" style="left:7.5px;top:577.5px;width:87.5px;height:21.5px"></div>
<div class="c pt" style="left:14.5px;top:582.5px;">让球&amp;大/小</div>
<svg class="a" style="left:76.0px;top:585.5px" width="11" height="7" viewBox="0 0 11 7"><path d="M1 1L5.5 5.5L10 1" fill="none" stroke="#444" stroke-width="1.6"/></svg>
<div class="pill" style="left:99.1px;top:577.5px;width:54.5px;height:21.5px"></div>
<div class="c pt" style="left:106.1px;top:582.5px;">角球</div>
<svg class="a" style="left:134.6px;top:585.5px" width="11" height="7" viewBox="0 0 11 7"><path d="M1 1L5.5 5.5L10 1" fill="none" stroke="#444" stroke-width="1.6"/></svg>
<div class="pill" style="left:157.7px;top:577.5px;width:65px;height:21.5px"></div>
<div class="c pt" style="left:164.7px;top:582.5px;">罚牌数</div>
<svg class="a" style="left:203.7px;top:585.5px" width="11" height="7" viewBox="0 0 11 7"><path d="M1 1L5.5 5.5L10 1" fill="none" stroke="#444" stroke-width="1.6"/></svg>
<div class="pill" style="left:226.79999999999998px;top:577.5px;width:54.5px;height:21.5px"></div>
<div class="c pt" style="left:233.79999999999998px;top:582.5px;">波胆</div>
<svg class="a" style="left:262.29999999999995px;top:585.5px" width="11" height="7" viewBox="0 0 11 7"><path d="M1 1L5.5 5.5L10 1" fill="none" stroke="#444" stroke-width="1.6"/></svg>
<div class="pill" style="left:285.4px;top:577.5px;width:77px;height:21.5px"></div>
<div class="c pt" style="left:292.4px;top:582.5px;">进球球员</div>
<svg class="a" style="left:340.4px;top:585.5px" width="11" height="7" viewBox="0 0 11 7"><path d="M1 1L5.5 5.5L10 1" fill="none" stroke="#444" stroke-width="1.6"/></svg>
<div class="a" style="left:0;top:609px;width:357px;height:1px;background:#f0f0f0"></div>
<svg class="a" style="left:13px;top:619.5px" width="17" height="16" viewBox="0 0 17 16"><path d="M8.50 1.60L10.85 5.36L15.16 6.44L12.30 9.84L12.61 14.26L8.50 12.60L4.39 14.26L4.70 9.84L1.84 6.44L6.15 5.36Z" fill="none" stroke="#8a8a8a" stroke-width="1.1" stroke-linejoin="round"/></svg>
<div class="c " style="left:43.5px;top:621.5999999999999px;font-size:11px;color:#222">15:00</div>
<svg class="a" style="left:78.8px;top:621.8px" width="11" height="11" viewBox="0 0 11 11"><circle cx="5.3" cy="5.3" r="4.6" fill="none" stroke="#555" stroke-width="1.3"/><path d="M3.2 3.2H5.1V5.9H7.8V7.6H5.2Q3.2 7.6 3.2 5.6Z" fill="#555"/></svg>
<div class="c hd" style="left:182.5px;top:622.8px;">让球</div>
<div class="c hd" style="left:233px;top:622.8px;">得分大小</div>
<div class="c hd" style="left:306.5px;top:622.8px;">独赢</div>
<div class="c tm" style="left:14px;top:653.8px;font-weight:bold">皇家马德里</div>
<div class="c tm" style="left:14px;top:683.3px;">希拉尔</div>
<div class="cell" style="left:163.5px;top:645.5px;width:58px;height:44px"></div>
<div class="c od" style="left:164.5px;top:654.8px;">-1.5</div>
<div class="c rd" style="left:164.5px;top:669.3px;">0.92</div>
<div class="cell" style="left:163.5px;top:693.5px;width:58px;height:44px"></div>
<div class="c od" style="left:164.5px;top:702.8px;">+1.5</div>
<div class="c rd" style="left:164.5px;top:717.3px;">1.03</div>
<div class="cell" style="left:225.5px;top:645.5px;width:58px;height:44px"></div>
<div class="c od" style="left:226.5px;top:654.8px;">大 3.5</div>
<div class="c rd" style="left:226.5px;top:669.3px;">0.97</div>
<div class="cell" style="left:225.5px;top:693.5px;width:58px;height:44px"></div>
<div class="c od" style="left:226.5px;top:702.8px;">小 3.5</div>
<div class="c rd" style="left:226.5px;top:717.3px;">0.85</div>
<div class="cell" style="left:287.5px;top:645.5px;width:58px;height:27.5px"></div>
<div class="cell" style="left:349.5px;top:645.5px;width:58px;height:27.5px"></div>
<div class="c" style="left:288.5px;top:654.3px;width:58px;text-align:center;font-size:12px;color:#222">主 <span style="color:#cc3620;font-weight:bold;font-size:12.5px">1.34</span></div>
<div class="cell" style="left:287.5px;top:677.1px;width:58px;height:27.5px"></div>
<div class="cell" style="left:349.5px;top:677.1px;width:58px;height:27.5px"></div>
<div class="c" style="left:288.5px;top:685.9px;width:58px;text-align:center;font-size:12px;color:#222">客 <span style="color:#cc3620;font-weight:bold;font-size:12.5px">8.00</span></div>
<div class="cell" style="left:287.5px;top:708.5px;width:58px;height:27.5px"></div>
<div class="cell" style="left:349.5px;top:708.5px;width:58px;height:27.5px"></div>
<div class="c" style="left:288.5px;top:717.3px;width:58px;text-align:center;font-size:12px;color:#222">和 <span style="color:#cc3620;font-weight:bold;font-size:12.5px">5.00</span></div>
<div class="a" style="left:353px;top:644.3px;width:4px;height:96px;background:#fff"></div>
<div class="c " style="left:14px;top:715.3px;font-size:11px;color:#555">153</div>
<svg class="a" style="left:34px;top:716.8px" width="5" height="8" viewBox="0 0 5 8"><path d="M0.5 0.5L4.5 4L0.5 7.5Z" fill="#666"/></svg>
<svg class="a" style="left:48px;top:715.8px" width="11" height="11" viewBox="0 0 11 11"><circle cx="5.5" cy="5.5" r="5.4" fill="#555"/><path d="M4 3.2L8 5.5L4 7.8Z" fill="#fff"/></svg>
<svg class="a" style="left:135px;top:713.8px" width="15" height="15" viewBox="0 0 15 15"><circle cx="7.5" cy="7.5" r="7.3" fill="#5a5a5a"/><path d="M9.6 5.2C9.2 4.3 8.4 4 7.5 4C6.4 4 5.5 4.6 5.5 5.6C5.5 7.6 9.6 6.9 9.6 9.2C9.6 10.3 8.6 10.9 7.5 10.9C6.5 10.9 5.7 10.5 5.3 9.6M7.5 2.6V12.4" fill="none" stroke="#fff" stroke-width="1.3"/></svg>
<div class="pill" style="left:7.5px;top:745.3px;width:87.5px;height:21.5px"></div>
<div class="c pt" style="left:14.5px;top:750.3px;">让球&amp;大/小</div>
<svg class="a" style="left:76.0px;top:753.3px" width="11" height="7" viewBox="0 0 11 7"><path d="M1 1L5.5 5.5L10 1" fill="none" stroke="#444" stroke-width="1.6"/></svg>
<div class="pill" style="left:99.1px;top:745.3px;width:54.5px;height:21.5px"></div>
<div class="c pt" style="left:106.1px;top:750.3px;">角球</div>
<svg class="a" style="left:134.6px;top:753.3px" width="11" height="7" viewBox="0 0 11 7"><path d="M1 1L5.5 5.5L10 1" fill="none" stroke="#444" stroke-width="1.6"/></svg>
<div class="pill" style="left:157.7px;top:745.3px;width:65px;height:21.5px"></div>
<div class="c pt" style="left:164.7px;top:750.3px;">罚牌数</div>
<svg class="a" style="left:203.7px;top:753.3px" width="11" height="7" viewBox="0 0 11 7"><path d="M1 1L5.5 5.5L10 1" fill="none" stroke="#444" stroke-width="1.6"/></svg>
<div class="pill" style="left:226.79999999999998px;top:745.3px;width:54.5px;height:21.5px"></div>
<div class="c pt" style="left:233.79999999999998px;top:750.3px;">波胆</div>
<svg class="a" style="left:262.29999999999995px;top:753.3px" width="11" height="7" viewBox="0 0 11 7"><path d="M1 1L5.5 5.5L10 1" fill="none" stroke="#444" stroke-width="1.6"/></svg>
<div class="pill" style="left:285.4px;top:745.3px;width:77px;height:21.5px"></div>
<div class="c pt" style="left:292.4px;top:750.3px;">进球球员</div>
<svg class="a" style="left:340.4px;top:753.3px" width="11" height="7" viewBox="0 0 11 7"><path d="M1 1L5.5 5.5L10 1" fill="none" stroke="#444" stroke-width="1.6"/></svg>
<div class="a" style="left:0;top:776.8px;width:357px;height:1px;background:#f0f0f0"></div>
<!-- footer -->
<div class="a" style="left:0;top:719px;width:357px;height:51px;background:#503e33"></div>
<div class="a" style="left:144.5px;top:719px;width:71px;height:51px;background:#a67f27"></div>
<svg class="a" style="left:26px;top:726px" width="24" height="23" viewBox="0 0 24 23"><circle cx="13.7" cy="9.6" r="9.1" fill="#e6c068"/><g fill="#503e33"><circle cx="10.5" cy="5.3" r="2.2"/><circle cx="16.8" cy="5.3" r="2.2"/><circle cx="8.5" cy="11.3" r="2.2"/><circle cx="18.8" cy="11.3" r="2.2"/><circle cx="13.5" cy="14.8" r="2.2"/></g><path d="M1.1 16.7L5.2 12.7M1.1 21.4L5.9 17.2M5.5 21.4L10 17.8" stroke="#e6c068" stroke-width="1.3" fill="none"/><path d="M4 17.5L7.5 14.2" stroke="#503e33" stroke-width="1.2"/></svg>
<div class="c ft" style="left:1.5px;top:753.5px;color:#e3b65c">体育</div>
<svg class="a" style="left:97.5px;top:728.5px" width="23" height="17" viewBox="0 0 23 17"><rect x="1" y="1" width="21" height="11.5" rx="1" fill="none" stroke="#c2bab4" stroke-width="1.6"/><path d="M11.5 12.5V15M6.5 15.8H16.5" stroke="#c2bab4" stroke-width="1.6"/></svg>
<div class="c ft" style="left:72.9px;top:753.5px">赛程</div>
<div class="c" style="left:142.8px;top:726px;width:74px;text-align:center;font-size:25.5px;color:#fff;-webkit-text-stroke:0.3px #fff">0</div>
<div class="c ft" style="left:144.9px;top:753.5px;color:#f5ead8;font-weight:normal;font-size:10.5px">注单</div>
<svg class="a" style="left:240.5px;top:727px" width="21" height="20" viewBox="0 0 21 20"><path d="M10.5 2.2L13.1 7.4L18.7 8.1L14.6 12L15.6 17.5L10.5 14.8L5.4 17.5L6.4 12L2.3 8.1L7.9 7.4Z" fill="#c2bab4" stroke="#c2bab4" stroke-width="2.4" stroke-linejoin="round"/></svg>
<div class="c ft" style="left:215.7px;top:753.5px">我的赛事</div>
<svg class="a" style="left:311px;top:726px" width="23" height="23" viewBox="0 0 23 23"><circle cx="11.5" cy="11.5" r="11" fill="#c2bab4"/><path d="M6.5 11.5L10 15L16.5 8" fill="none" stroke="#503e33" stroke-width="2"/></svg>
<div class="c ft" style="left:287.1px;top:753.5px">投注记录</div>
</div>

</body></html>
